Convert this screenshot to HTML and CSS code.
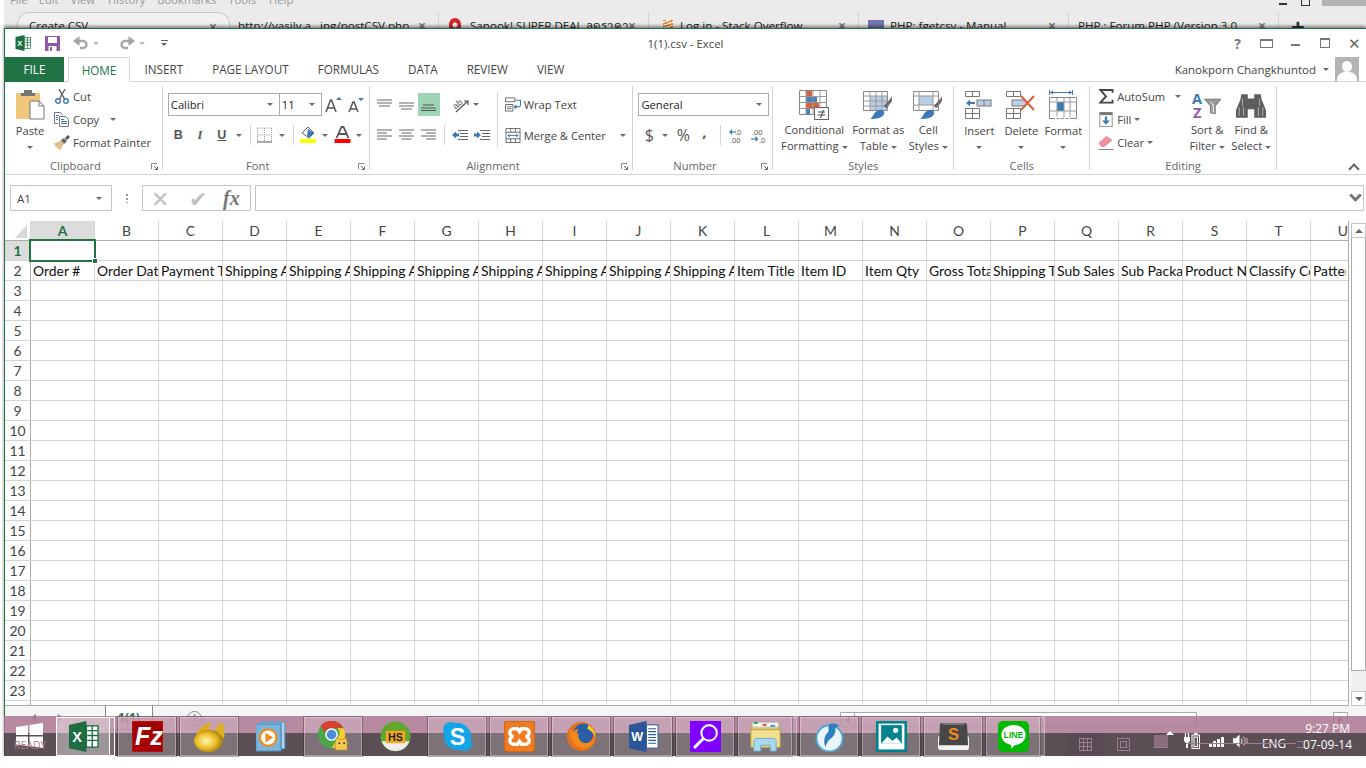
FILE: index.html
```html
<!DOCTYPE html>
<html lang="en">
<head>
<meta charset="utf-8">
<title>1(1).csv - Excel</title>
<link rel="stylesheet" href="styles.css">
</head>
<body>
<svg class="sprites" aria-hidden="true">
  <symbol id="xl" viewBox="0 0 32 32"><path d="M1 4 19 0v32L1 28z" fill="#1d6f42"/><rect x="19" y="5" width="12" height="22" fill="#fff" stroke="#1d6f42" stroke-width="1.4"/><path d="M20 10h11M20 15h11M20 20h11M25 5v22" stroke="#1d6f42" stroke-width="1.4"/><text x="4.5" y="22" font-family="Liberation Sans" font-weight="700" font-size="15" fill="#fff">X</text></symbol>
  <symbol id="save" viewBox="0 0 15 15"><rect width="15" height="15" fill="#8e5aa8"/><rect x="3" y="1" width="9" height="6" fill="#fff"/><rect x="3.5" y="10" width="8" height="5" fill="#fff"/><rect x="5" y="11" width="2" height="4" fill="#8e5aa8"/></symbol>
  <symbol id="undo" viewBox="0 0 16 14"><path d="M3 5h7a3.5 3.5 0 0 1 0 7H7" fill="none" stroke="#a6a6a6" stroke-width="2.4"/><path d="M6.5 0 0 5l6.500 5z" fill="#a6a6a6"/></symbol>
  <symbol id="redo" viewBox="0 0 16 14"><path d="M13 5H6a3.500 3.500 0 0 0 0 7h3" fill="none" stroke="#a6a6a6" stroke-width="2.400"/><path d="M9.500 0 16 5l-6.500 5z" fill="#a6a6a6"/></symbol>
  <symbol id="paste" viewBox="0 0 29 30"><rect x="0" y="3" width="24" height="26" rx="1" fill="#efc67c"/><rect x="8" y="0" width="8" height="4" fill="#767676"/><rect x="5" y="3" width="14" height="3" fill="#767676"/><path d="M14 11h9l5 5v13H14z" fill="#fff" stroke="#777"/><path d="M23 11v5h5" fill="none" stroke="#777"/></symbol>
  <symbol id="cut" viewBox="0 0 14 15"><circle cx="3" cy="12" r="2.300" fill="none" stroke="#3d7ab5" stroke-width="1.400"/><circle cx="11" cy="12" r="2.300" fill="none" stroke="#3d7ab5" stroke-width="1.400"/><path d="M4.500 10 10 0M9.500 10 4 0" stroke="#666" stroke-width="1.500"/></symbol>
  <symbol id="copy" viewBox="0 0 16 15"><path d="M.5.500h6l2 2V3M.5.500v11H4" fill="none" stroke="#777"/><path d="M5.500 4.500h6l3 3v7h-9z" fill="#fff" stroke="#777"/><path d="M2 3.500h3M2 5.500h2M2 7.500h2M7 7.500h3M7 9.500h6M7 11.500h6" stroke="#3d7ab5"/></symbol>
  <symbol id="brush" viewBox="0 0 16 15"><path d="M0 8c3 0 5-1 7-3l3 4c-2 2-3 4-3 6-3-1-6-3-7-7z" fill="#dfc187"/><path d="M7 5l3 4 3-3-3-3z" fill="#666"/><path d="M11 3l3-3 2 2-3 3z" fill="#555"/></symbol>
  <symbol id="launch" viewBox="0 0 7 7"><path d="M.5 6V.5H6" fill="none" stroke="#888"/><path d="M3 3l3 3M6.500 3.500v3h-3" fill="none" stroke="#666"/></symbol>
  <symbol id="growA" viewBox="0 0 18 16"><path d="M1 15 5.500 3h1L11 15M3 11h6" fill="none" stroke="#555" stroke-width="1.500"/><path d="M11 3l3-3 3 3z" fill="#3d7ab5"/></symbol>
  <symbol id="shrinkA" viewBox="0 0 18 16"><path d="M2 15 6 5h1l4 10M4 12h5" fill="none" stroke="#555" stroke-width="1.500"/><path d="M11 1h6l-3 3z" fill="#3d7ab5"/></symbol>
  <symbol id="borders" viewBox="0 0 15 15"><path d="M.5.500h14M.5 7.500h14M.5.500v14M7.500.500v14M14.500.500v14" stroke="#999" stroke-dasharray="1 1" fill="none"/><path d="M0 14.500h15" stroke="#555"/></symbol>
  <symbol id="fill" viewBox="0 0 17 18"><path d="M2 7l6-6 6 6-5 5z" fill="#fff" stroke="#666"/><path d="M8 3l6 4-5 5-2-2z" fill="#3d7ab5"/><rect y="13" width="16" height="4" fill="#ff0"/></symbol>
  <symbol id="fontA" viewBox="0 0 16 18"><path d="M2 12 7 1h2l5 11M4.500 8h7" fill="none" stroke="#555" stroke-width="1.800"/><rect y="13" width="16" height="4" fill="#f00"/></symbol>
  <symbol id="atop" viewBox="0 0 15 12"><path d="M0 1h15M0 4h15M2 7h11" stroke="#666"/></symbol>
  <symbol id="amid" viewBox="0 0 15 12"><path d="M0 4h15M0 7h15M2 10h11" stroke="#666"/></symbol>
  <symbol id="abot" viewBox="0 0 15 12"><path d="M2 6h11M0 9h15M0 11.500h15" stroke="#555"/></symbol>
  <symbol id="orient" viewBox="0 0 18 16"><text x="1" y="10" font-family="Liberation Sans" font-size="9" fill="#555" transform="rotate(-40 6 8)">ab</text><path d="M4 15 16 4M12 4h4v4" fill="none" stroke="#555" stroke-width="1.200"/></symbol>
  <symbol id="lleft" viewBox="0 0 15 12"><path d="M0 1h15M0 4h10M0 7h15M0 10h10" stroke="#666"/></symbol>
  <symbol id="lcen" viewBox="0 0 15 12"><path d="M0 1h15M2.500 4h10M0 7h15M2.500 10h10" stroke="#666"/></symbol>
  <symbol id="lright" viewBox="0 0 15 12"><path d="M0 1h15M5 4h10M0 7h15M5 10h10" stroke="#666"/></symbol>
  <symbol id="indL" viewBox="0 0 16 12"><path d="M6 1h10M8 4h8M8 7h8M6 10h10" stroke="#666"/><path d="M0 5.500 4 2v2h3v3H4v2z" fill="#3d7ab5"/></symbol>
  <symbol id="indR" viewBox="0 0 16 12"><path d="M6 1h10M8 4h8M8 7h8M6 10h10" stroke="#666"/><path d="M7 5.500 3 2v2H0v3h3v2z" fill="#3d7ab5"/></symbol>
  <symbol id="wrap" viewBox="0 0 17 15"><path d="M.5.500h10v4H.5zM.5 7.500h8v7H.5zM2 10h5M2 12h5" fill="none" stroke="#666"/><path d="M11 3h6M16.500 3v5c0 2-2 2-3 2H10" fill="none" stroke="#3d7ab5" stroke-width="1.200"/><path d="M9 10l3-2.500v5z" fill="#3d7ab5"/></symbol>
  <symbol id="merge" viewBox="0 0 16 16"><path d="M.5.500h15v15H.5zM.5 4.500h15M.5 11.500h15M5.500.500v4M10.500.500v4M5.500 11.500v4M10.500 11.500v4" fill="none" stroke="#666"/><path d="M3 8h10" stroke="#3d7ab5"/><path d="M2 8l2.500-2v4zM14 8l-2.500-2v4z" fill="#3d7ab5"/></symbol>
  <symbol id="incdec" viewBox="0 0 16 15"><text x="6" y="6.500" font-family="Liberation Sans" font-size="7.500" fill="#555">.0</text><text x="1" y="14.500" font-family="Liberation Sans" font-size="7.500" fill="#555">.00</text><path d="M1 4h6" stroke="#3d7ab5" stroke-width="1.200"/><path d="M0 4l3-3v6z" fill="#3d7ab5"/></symbol>
  <symbol id="decinc" viewBox="0 0 16 15"><text x="1" y="6.500" font-family="Liberation Sans" font-size="7.500" fill="#555">.00</text><text x="8" y="14.500" font-family="Liberation Sans" font-size="7.500" fill="#555">.0</text><path d="M0 11h6" stroke="#3d7ab5" stroke-width="1.200"/><path d="M7.500 11l-3-3v6z" fill="#3d7ab5"/></symbol>
  <symbol id="cf" viewBox="0 0 30 30"><path d="M.5.500h27v24H.5z" fill="#fff" stroke="#888"/><rect x="7" y="1" width="6" height="5" fill="#d9603c"/><rect x="7" y="6" width="11" height="6" fill="#4a81bd"/><rect x="7" y="13" width="13" height="5" fill="#d9603c"/><rect x="7" y="19" width="4" height="6" fill="#4a81bd"/><path d="M7 1v24M14 1v24M21 1v24M1 6.500h27M1 12.500h27M1 18.500h27" stroke="#999" fill="none"/><rect x="15.500" y="17.500" width="14" height="12" fill="#fff" stroke="#666"/><path d="M19 22h7M19 25h7M24.500 20l-3 8" stroke="#444" fill="none"/></symbol>
  <symbol id="fat" viewBox="0 0 30 30"><path d="M.5 1.500h24v19H.5z" fill="#fff" stroke="#888"/><rect x="7" y="6" width="17" height="14" fill="#b8cfe5"/><path d="M7 1.500v19M13 1.500v19M19 1.500v19M1 6h24M1 11h24M1 16h24" stroke="#999" fill="none"/><path d="M21 16 28 8l1 1-6 9z" fill="#555"/><path d="M22 16l5-6 2-4v5l-5 7z" fill="#707070"/><path d="M7 29c3-1 3-7 9-9 3-1 6 1 5 4-1 4-8 5-14 5z" fill="#3d78b8"/></symbol>
  <symbol id="cs" viewBox="0 0 30 30"><path d="M.5 1.500h25v19H.5z" fill="#fff" stroke="#888"/><rect x="6" y="6" width="14" height="9" fill="#b8cfe5"/><path d="M6 1.500v19M20 1.500v19M1 6h25M1 15h25" stroke="#999" fill="none"/><path d="M21 16 28 8l1 1-6 9z" fill="#555"/><path d="M22 16l5-6 2-4v5l-5 7z" fill="#707070"/><path d="M7 29c3-1 3-7 9-9 3-1 6 1 5 4-1 4-8 5-14 5z" fill="#3d78b8"/></symbol>
  <symbol id="ins" viewBox="0 0 28 28"><path d="M.5.500h14v5H.5zM7.500.500v5M.5 17.500h14v10H.5zM.5 22.500h14M7.500 17.500v10" fill="none" stroke="#777"/><rect x="12" y="9" width="14" height="6" fill="#b8cfe5" stroke="#777"/><path d="M19 9v6" stroke="#777"/><path d="M3 12h7" stroke="#3d7ab5" stroke-width="2"/><path d="M1 12l4-3.500v7z" fill="#3d7ab5"/></symbol>
  <symbol id="del" viewBox="0 0 30 28"><path d="M.5.500h14v5H.5zM7.500.500v5M.5 17.500h14v10H.5zM.5 22.500h14M7.500 17.500v10" fill="none" stroke="#777"/><path d="M6 9h12l3 3-3 3H6z" fill="#b8cfe5" stroke="#777"/><path d="M15 5l13 14M28 5 15 19" stroke="#d9603c" stroke-width="2"/></symbol>
  <symbol id="fmt" viewBox="0 0 28 30"><path d="M1 2.500h22" stroke="#3d7ab5"/><path d="M.5 0v5M23.500 0v5" stroke="#3d7ab5"/><path d="M1 2.500l3-2v4zM23 2.500l-3-2v4z" fill="#3d7ab5"/><path d="M.5 7.500h27v21H.5z" fill="#fff" stroke="#888"/><rect x="8" y="12" width="7" height="9" fill="#3d7ab5"/><path d="M8 7.500v21M15 7.500v21M21 7.500v21M1 12h27M1 21h27" stroke="#999" fill="none"/><path d="M6 28.500q3-3 6 0M15 28.500q3-3 6 0" stroke="#fff" stroke-width="2" fill="none"/></symbol>
  <symbol id="sigma" viewBox="0 0 16 16"><path d="M15 4V1H2l6 7-6 6.500h13v-3" fill="none" stroke="#444" stroke-width="2"/></symbol>
  <symbol id="fillb" viewBox="0 0 15 17"><rect x=".5" y=".5" width="14" height="16" fill="#fff" stroke="#888"/><rect x=".5" y=".5" width="14" height="3" fill="#777"/><path d="M7.500 5v6" stroke="#3d7ab5" stroke-width="2.500"/><path d="M3 9.500h9l-4.500 5z" fill="#3d7ab5"/></symbol>
  <symbol id="eraser" viewBox="0 0 15 15"><path d="M0 8 8 1l6 4-8 7H3z" fill="#ee8e9a"/><path d="M0 14.500h15" stroke="#888"/></symbol>
  <symbol id="sort" viewBox="0 0 31 28"><text x="0" y="12.500" font-family="Open Sans" font-weight="700" font-size="15" fill="#3d7ab5">A</text><text x="1" y="27" font-family="Open Sans" font-weight="700" font-size="15" fill="#8e5aa8">Z</text><path d="M13 8h17l-6 7v8l-5-1v-7z" fill="#999" stroke="#777"/><path d="M19 11l3 3v8" stroke="#fff" fill="none"/></symbol>
  <symbol id="find" viewBox="0 0 28 26"><path d="M5 3h6v4h6V3h6l1 5 4 10v7H17v-8h-6v8H0v-7L4 8z" fill="#5e5e5e"/><path d="M3 15v8M7 15v8M21 15v8M25 15v8M6 7v7M22 7v7" stroke="#aaa"/></symbol>
  <symbol id="win" viewBox="0 0 27 25"><path d="M0 4 12 2.300V12H0zM13.500 2l13.500-2v12H13.500zM0 13.500h12V23L0 21.500zM13.500 13.500H27V25l-13.500-2z" fill="#fff"/></symbol>
  <symbol id="fz" viewBox="0 0 32 32"><rect width="32" height="32" fill="#a40000" stroke="#d33" stroke-dasharray="2 1"/><text x="3" y="25" font-family="Liberation Sans" font-weight="700" font-style="italic" font-size="26" fill="#fff">Fz</text></symbol>
  <symbol id="navi" viewBox="0 0 32 32"><defs><radialGradient id="gold" cx=".42" cy=".5" r=".65"><stop offset="0" stop-color="#fff3b5"/><stop offset=".5" stop-color="#eec02a"/><stop offset="1" stop-color="#8a6708"/></radialGradient></defs><path d="M21 14C22 8 25 3 29 1c2 5 3 11 2 17z" fill="#e0b020"/><path d="M2 18C2 9 9 3 19 2c-3 3-4 6-4 9z" fill="#dcab1e"/><ellipse cx="15" cy="20.500" rx="15" ry="11.500" fill="url(#gold)"/></symbol>
  <symbol id="wmp" viewBox="0 0 28 28"><rect x="6" y="1" width="20" height="24" fill="#b7d5ea" stroke="#5a9ccb"/><rect x="3" y="2" width="20" height="24" fill="#a5cbe6" stroke="#5a9ccb"/><rect x="0" y="3" width="22" height="24" fill="#7cb5dc" stroke="#5a9ccb"/><circle cx="11" cy="15" r="8.500" fill="#f08a1d"/><circle cx="11" cy="15" r="6.500" fill="#fff"/><path d="M8.500 10.500l7 4.500-7 4.500z" fill="#f08a1d"/></symbol>
  <symbol id="chrome" viewBox="0 0 32 32"><circle cx="14" cy="14" r="14" fill="#4aa648"/><path d="M14 0a14 14 0 0 1 12.500 7.500H14a7 7 0 0 0-6.500 4L2.500 5A14 14 0 0 1 14 0z" fill="#d8412f"/><path d="M26.500 7.500A14 14 0 0 1 14 28l6-10a7 7 0 0 0 0-10.500z" fill="#f7cd2f"/><circle cx="14" cy="14" r="6.500" fill="#fff"/><circle cx="14" cy="14" r="5" fill="#4a8bd6"/><path d="M18 22l1-5 3 2h4l3-2 1 5v8H18z" fill="#f5c94d" stroke="#b8862a" stroke-width=".6"/><circle cx="22" cy="23" r="1" fill="#333"/><circle cx="27" cy="23" r="1" fill="#333"/></symbol>
  <symbol id="hs" viewBox="0 0 32 32"><circle cx="16" cy="16" r="15.500" fill="#5fa72f"/><path d="M1.500 21h29A15.500 15.500 0 0 1 1.500 21z" fill="#eee"/><rect x="6" y="10" width="20" height="13" rx="1" fill="#f4a81d"/><text x="16" y="21" text-anchor="middle" font-family="Liberation Sans" font-weight="700" font-size="11" fill="#222">HS</text></symbol>
  <symbol id="skype" viewBox="0 0 32 32"><circle cx="9" cy="9" r="8" fill="#12a5e8"/><circle cx="23" cy="23" r="8" fill="#12a5e8"/><circle cx="16" cy="16" r="14" fill="#12a5e8"/><text x="16" y="24.500" text-anchor="middle" font-family="Liberation Sans" font-weight="700" font-size="24" fill="#fff">S</text></symbol>
  <symbol id="xampp" viewBox="0 0 32 32"><rect width="32" height="32" rx="4" fill="#ee7a22" stroke="#b65a12"/><path d="M10 8h4l2 3 2-3h4a4 4 0 0 1 0 8 4 4 0 0 1 0 8h-4l-2-3-2 3h-4a4 4 0 0 1 0-8 4 4 0 0 1 0-8z" fill="none" stroke="#fff" stroke-width="3.500"/></symbol>
  <symbol id="fx" viewBox="0 0 32 32"><circle cx="16" cy="16" r="15" fill="#e8701a"/><circle cx="18" cy="13" r="10.500" fill="#2a5fa8"/><path d="M4 10c0 9 5 18 14 18 7 0 11-5 12-11-2 4-5 6-9 6-6 0-9-5-8-9-2-1-2-3 0-6-4 1-6 3-7 5 0-2 0-3 1-4-2 1-3 1-3 1z" fill="#f28a1e"/><path d="M23 4c4 2 8 7 7 13-1-4-4-7-8-9z" fill="#f7c52f"/></symbol>
  <symbol id="word" viewBox="0 0 32 32"><path d="M1 4 19 0v32L1 28z" fill="#2b579a"/><rect x="19" y="4" width="12" height="24" fill="#fff" stroke="#2b579a"/><path d="M21 8h8M21 11h8M21 14h8M21 17h8M21 20h8M21 23h8" stroke="#2b579a" stroke-width="1.200"/><text x="9.500" y="21" text-anchor="middle" font-family="Liberation Sans" font-weight="700" font-size="13" fill="#fff">W</text></symbol>
  <symbol id="mag" viewBox="0 0 30 30"><rect width="30" height="30" fill="#7f00ff"/><circle cx="18.500" cy="11.500" r="7.500" fill="none" stroke="#fff" stroke-width="2"/><path d="M13 17 4 26" stroke="#fff" stroke-width="2.800"/></symbol>
  <symbol id="folder" viewBox="0 0 32 30"><path d="M1 4h28l2 4v18H1z" fill="#d9c16d" stroke="#bda54a"/><path d="M3 1h26v4H3z" fill="#fff" stroke="#ddd"/><rect x="4" y="0" width="4" height="2" fill="#1aaa35"/><rect x="13" y="2" width="4" height="2" fill="#d44"/><rect x="21" y="3" width="5" height="2" fill="#3ba0e0"/><path d="M1 8h30v18H1z" fill="#f2e08f" stroke="#bda54a"/><path d="M4 30V19q0-2 2-2h18q3 0 3 2v11h-6v-6H11v6z" fill="#a9d8ef" stroke="#6fb2d6"/></symbol>
  <symbol id="tbird" viewBox="0 0 30 32"><circle cx="15" cy="18" r="13.500" fill="#eaf6fb" stroke="#4fa7cf" stroke-width="2"/><path d="M14 4c4-3 9-1 11 1l-4 2c1 5-2 10-6 12-2 2-4 6-4 8-3-6-1-13 3-16z" fill="#2f7fc1"/></symbol>
  <symbol id="photo" viewBox="0 0 30 30"><rect width="30" height="30" fill="#00838f"/><rect x="2.500" y="2.500" width="25" height="25" fill="#fff"/><rect x="5" y="4" width="20" height="18" fill="#00838f"/><path d="M5 22l6-7 5 4 4-3 5 6z" fill="#fff"/><circle cx="19" cy="9" r="2.500" fill="#fff"/></symbol>
  <symbol id="subl" viewBox="0 0 32 30"><rect x="0" y="14" width="32" height="15" rx="3" fill="#f2f2f2"/><path d="M4 1h24q2 0 2 2l1 21H1L2 3q0-2 2-2z" fill="#474747"/><path d="M5 1h22v2H5z" fill="#777"/><text x="16" y="19" text-anchor="middle" font-family="Liberation Sans" font-weight="700" font-size="17" fill="#f08a1d">S</text></symbol>
  <symbol id="line" viewBox="0 0 32 32"><rect width="32" height="32" rx="5" fill="#00b900"/><ellipse cx="16" cy="14.500" rx="12.500" ry="10.500" fill="#fff"/><path d="M13 24l5 0-4 4.500z" fill="#fff"/><text x="16" y="18" text-anchor="middle" font-family="Liberation Sans" font-weight="700" font-size="9" fill="#00b900">LINE</text></symbol>
  <symbol id="powr" viewBox="0 0 16 16"><path d="M1.500 0v4M4.500 0v4" stroke="#fff" stroke-width="1.200"/><path d="M0 4h6v4L4 10v5H2v-5L0 8z" fill="#fff"/><rect x="8" y="2" width="7.500" height="13.500" fill="none" stroke="#fff"/><rect x="10" y="0" width="3.500" height="2" fill="#fff"/><rect x="9.500" y="3.500" width="4.500" height="10.500" fill="#fff"/><rect x="10.500" y="4.500" width="2.500" height="8.500" fill="#6a5c65"/></symbol>
  <symbol id="spk" viewBox="0 0 15 14"><path d="M0 4h3l4-4v14l-4-4H0z" fill="#fff"/><path d="M9 4.500q1.500 2.500 0 5M11.500 2.500q3 4.500 0 9" fill="none" stroke="#fff"/></symbol>
</svg>

<header class="browser">
  <div class="bmenu">
    <span class="m1">File</span><span class="m2">Edit</span><span class="m3">View</span><span class="m4">History</span><span class="m5">Bookmarks</span><span class="m6">Tools</span><span class="m7">Help</span>
    <span class="bctrl"><i class="bmin"></i><i class="bmax"></i><i class="bclose"></i></span>
  </div>
  <div class="btabs">
    <div class="btab first"><span>Create CSV</span><b>×</b></div>
    <div class="btab t2"><span>http://vasily.a...ing/postCSV.php</span><b>×</b></div>
    <div class="btab t3"><i class="fav-s"></i><span>Sanook! SUPER DEAL ลดราคา</span><b>×</b></div>
    <div class="btab t4"><i class="fav-so"></i><span>Log in - Stack Overflow</span><b>×</b></div>
    <div class="btab t5"><i class="fav-php"></i><span>PHP: fgetcsv - Manual</span><b>×</b></div>
    <div class="btab t6"><span>PHP : Forum PHP (Version 3.0</span><b>×</b></div>
    <div class="bplus">+</div>
  </div>
</header>

<main class="window">
  <div class="titlebar">
    <div class="qat">
      <svg class="i-xl"><use href="#xl"/></svg>
      <svg class="i-save"><use href="#save"/></svg>
      <svg class="i-undo"><use href="#undo"/></svg><i class="caret lite"></i>
      <svg class="i-redo"><use href="#redo"/></svg><i class="caret lite"></i>
      <span class="qcust"></span>
    </div>
    <div class="doctitle">1(1).csv - Excel</div>
    <div class="winbtns">
      <span class="wb help">?</span>
      <span class="wb"><span class="ropt"></span></span>
      <span class="wb"><span class="wmin"></span></span>
      <span class="wb"><span class="wmax"></span></span>
      <span class="wb close">✕</span>
    </div>
  </div>

  <nav class="tabs">
    <span class="tab file">FILE</span>
    <span class="tab home">HOME</span>
    <span class="tab">INSERT</span>
    <span class="tab">PAGE LAYOUT</span>
    <span class="tab">FORMULAS</span>
    <span class="tab">DATA</span>
    <span class="tab">REVIEW</span>
    <span class="tab">VIEW</span>
    <span class="user">Kanokporn Changkhuntod<i class="caret"></i><span class="avatar"><i></i><b></b></span></span>
  </nav>

  <section class="ribbon">
    <div class="group g-clip">
      <div class="gbody">
        <div class="big paste"><div class="bigicon"><svg class="i-paste"><use href="#paste"/></svg></div><span>Paste</span><i class="caret low"></i></div>
        <div class="smallcol">
          <div class="small"><svg class="si"><use href="#cut"/></svg><span>Cut</span></div>
          <div class="small"><svg class="si"><use href="#copy"/></svg><span>Copy</span><i class="caret gap11"></i></div>
          <div class="small"><svg class="si"><use href="#brush"/></svg><span>Format Painter</span></div>
        </div>
      </div>
      <div class="glabel withlaunch">Clipboard<svg class="launch"><use href="#launch"/></svg></div>
    </div>

    <div class="group g-font">
      <div class="gbody rows">
        <div class="row1">
          <div class="combo w-font"><span>Calibri</span><i class="caret"></i></div>
          <div class="combo w-size"><span>11</span><i class="caret"></i></div>
          <span class="t w22 ml1"><svg class="i18"><use href="#growA"/></svg></span>
          <span class="t w22"><svg class="i18"><use href="#shrinkA"/></svg></span>
        </div>
        <div class="row2">
          <span class="t w21 bold">B</span><span class="t w22 ital">I</span><span class="t w22 und">U</span><span class="t w12"><i class="caret"></i></span>
          <span class="vsep ml5"></span>
          <span class="t w16 ml6"><svg class="i15"><use href="#borders"/></svg></span><span class="t w18"><i class="caret"></i></span>
          <span class="vsep ml2"></span>
          <span class="t w16 ml7"><svg class="i17"><use href="#fill"/></svg></span><span class="t w16"><i class="caret"></i></span>
          <span class="t w16 ml2"><svg class="i17"><use href="#fontA"/></svg></span><span class="t w16"><i class="caret"></i></span>
        </div>
      </div>
      <div class="glabel withlaunch">Font<svg class="launch"><use href="#launch"/></svg></div>
    </div>

    <div class="group g-align">
      <div class="gbody">
        <div class="rows aligncol">
          <div class="row1">
            <span class="t w22"><svg class="i15"><use href="#atop"/></svg></span>
            <span class="t w22"><svg class="i15"><use href="#amid"/></svg></span>
            <span class="t w22 picked"><svg class="i15"><use href="#abot"/></svg></span>
            <span class="t w22 ml10"><svg class="i18"><use href="#orient"/></svg></span>
            <span class="t w8"><i class="caret"></i></span>
          </div>
          <div class="row2">
            <span class="t w22"><svg class="i15"><use href="#lleft"/></svg></span>
            <span class="t w22"><svg class="i15"><use href="#lcen"/></svg></span>
            <span class="t w22"><svg class="i15"><use href="#lright"/></svg></span>
            <span class="vsep ml4"></span>
            <span class="t w22 ml4"><svg class="i16"><use href="#indL"/></svg></span>
            <span class="t w22"><svg class="i16"><use href="#indR"/></svg></span>
          </div>
        </div>
        <span class="vsep tall"></span>
        <div class="rows wrapcol">
          <div class="row1 txt"><svg class="si"><use href="#wrap"/></svg><span>Wrap Text</span></div>
          <div class="row2 txt"><svg class="si"><use href="#merge"/></svg><span>Merge &amp; Center</span><i class="caret gap10"></i></div>
        </div>
      </div>
      <div class="glabel withlaunch">Alignment<svg class="launch"><use href="#launch"/></svg></div>
    </div>

    <div class="group g-num">
      <div class="gbody rows">
        <div class="row1"><div class="combo w-gen"><span>General</span><i class="caret"></i></div></div>
        <div class="row2">
          <span class="t w22 sym">$</span><span class="t w10"><i class="caret"></i></span>
          <span class="t w22 ml2 sym">%</span><span class="t w20 comma">,</span>
          <span class="vsep ml6"></span>
          <span class="t w22 ml5"><svg class="i16"><use href="#incdec"/></svg></span>
          <span class="t w22"><svg class="i16"><use href="#decinc"/></svg></span>
        </div>
      </div>
      <div class="glabel withlaunch">Number<svg class="launch"><use href="#launch"/></svg></div>
    </div>

    <div class="group g-styles">
      <div class="gbody">
        <div class="big w82"><div class="bigicon"><svg class="i30"><use href="#cf"/></svg></div><span>Conditional</span><span>Formatting<i class="caret in"></i></span></div>
        <div class="big w46"><div class="bigicon"><svg class="i30"><use href="#fat"/></svg></div><span>Format as</span><span>Table<i class="caret in"></i></span></div>
        <div class="big w54"><div class="bigicon"><svg class="i30"><use href="#cs"/></svg></div><span>Cell</span><span>Styles<i class="caret in"></i></span></div>
      </div>
      <div class="glabel">Styles</div>
    </div>

    <div class="group g-cells">
      <div class="gbody">
        <div class="big w50"><div class="bigicon"><svg class="i28"><use href="#ins"/></svg></div><span>Insert</span><i class="caret low"></i></div>
        <div class="big w34"><div class="bigicon"><svg class="i30"><use href="#del"/></svg></div><span>Delete</span><i class="caret low"></i></div>
        <div class="big w50"><div class="bigicon"><svg class="i30"><use href="#fmt"/></svg></div><span>Format</span><i class="caret low"></i></div>
      </div>
      <div class="glabel">Cells</div>
    </div>

    <div class="group g-edit">
      <div class="gbody">
        <div class="smallcol editcol">
          <div class="small"><svg class="si"><use href="#sigma"/></svg><span>AutoSum</span><i class="caret gap8"></i></div>
          <div class="small"><svg class="si"><use href="#fillb"/></svg><span>Fill</span><i class="caret in"></i></div>
          <div class="small"><svg class="si"><use href="#eraser"/></svg><span>Clear</span><i class="caret in"></i></div>
        </div>
        <div class="big w44"><div class="bigicon"><svg class="i30"><use href="#sort"/></svg></div><span>Sort &amp;</span><span>Filter<i class="caret in"></i></span></div>
        <div class="big w44"><div class="bigicon"><svg class="i30"><use href="#find"/></svg></div><span>Find &amp;</span><span>Select<i class="caret in"></i></span></div>
      </div>
      <div class="glabel">Editing</div>
    </div>
    <div class="collapse"><i></i></div>
  </section>

  <section class="fbar">
    <div class="namebox"><span>A1</span><i class="caret"></i></div>
    <div class="fdots"></div>
    <div class="fxbox"><span class="fxx">✕</span><span class="fxc">✔</span><span class="fxf">fx</span></div>
    <div class="finput"><i class="fchev"></i></div>
  </section>

  <section class="sheet">
    <div class="grid">
      <div class="colhead">
        <span class="corner"><i></i></span>
        <span class="ch on">A</span><span class="ch">B</span><span class="ch">C</span><span class="ch">D</span><span class="ch">E</span><span class="ch">F</span><span class="ch">G</span><span class="ch">H</span><span class="ch">I</span><span class="ch">J</span><span class="ch">K</span><span class="ch">L</span><span class="ch">M</span><span class="ch">N</span><span class="ch">O</span><span class="ch">P</span><span class="ch">Q</span><span class="ch">R</span><span class="ch">S</span><span class="ch">T</span><span class="ch last">U</span>
      </div>
      <div class="gr"><span class="rh on">1</span><div class="blank"><div class="a1"><i></i></div></div></div>
      <div class="gr"><span class="rh">2</span>
        <span class="c">Order #</span><span class="c">Order Date</span><span class="c">Payment Type</span><span class="c">Shipping Address</span><span class="c">Shipping Address</span><span class="c">Shipping Address</span><span class="c">Shipping Address</span><span class="c">Shipping Address</span><span class="c">Shipping Address</span><span class="c">Shipping Address</span><span class="c">Shipping Address</span><span class="c">Item Title</span><span class="c">Item ID</span><span class="c">Item Qty</span><span class="c">Gross Total</span><span class="c">Shipping Total</span><span class="c">Sub Sales</span><span class="c">Sub Package</span><span class="c">Product Name</span><span class="c">Classify Code</span><span class="c last">Pattern</span>
      </div>
      <div class="gr"><span class="rh">3</span><div class="blank"></div></div>
      <div class="gr"><span class="rh">4</span><div class="blank"></div></div>
      <div class="gr"><span class="rh">5</span><div class="blank"></div></div>
      <div class="gr"><span class="rh">6</span><div class="blank"></div></div>
      <div class="gr"><span class="rh">7</span><div class="blank"></div></div>
      <div class="gr"><span class="rh">8</span><div class="blank"></div></div>
      <div class="gr"><span class="rh">9</span><div class="blank"></div></div>
      <div class="gr"><span class="rh">10</span><div class="blank"></div></div>
      <div class="gr"><span class="rh">11</span><div class="blank"></div></div>
      <div class="gr"><span class="rh">12</span><div class="blank"></div></div>
      <div class="gr"><span class="rh">13</span><div class="blank"></div></div>
      <div class="gr"><span class="rh">14</span><div class="blank"></div></div>
      <div class="gr"><span class="rh">15</span><div class="blank"></div></div>
      <div class="gr"><span class="rh">16</span><div class="blank"></div></div>
      <div class="gr"><span class="rh">17</span><div class="blank"></div></div>
      <div class="gr"><span class="rh">18</span><div class="blank"></div></div>
      <div class="gr"><span class="rh">19</span><div class="blank"></div></div>
      <div class="gr"><span class="rh">20</span><div class="blank"></div></div>
      <div class="gr"><span class="rh">21</span><div class="blank"></div></div>
      <div class="gr"><span class="rh">22</span><div class="blank"></div></div>
      <div class="gr"><span class="rh">23</span><div class="blank"></div></div>
      <div class="gr partial"><span class="rh"></span><div class="blank"></div></div>
    </div>
    <div class="vscroll">
      <div class="sbtn"><i class="up"></i></div>
      <div class="sthumb"></div>
      <div class="sbtn"><i class="down"></i></div>
    </div>
  </section>

  <section class="sheetbar">
    <div class="snav"><i class="al"></i><i class="ar"></i></div>
    <div class="stab">1(1)</div>
    <div class="splus">+</div>
    <div class="hscroll"><span class="hb"><i class="al"></i></span><span class="hthumb"></span><span class="hb end"><i class="ar"></i></span></div>
  </section>
</main>

<footer class="taskbar">
  <span class="ready">READY</span>
  <div class="start"><svg class="i-win"><use href="#win"/></svg></div>
  <div class="tb act stack"><svg class="ti"><use href="#xl"/></svg></div>
  <div class="tb on"><svg class="ti"><use href="#fz"/></svg></div>
  <div class="tb on"><svg class="ti"><use href="#navi"/></svg></div>
  <div class="tb"><svg class="ti"><use href="#wmp"/></svg></div>
  <div class="tb on"><svg class="ti"><use href="#chrome"/></svg></div>
  <div class="tb"><svg class="ti"><use href="#hs"/></svg></div>
  <div class="tb on"><svg class="ti"><use href="#skype"/></svg></div>
  <div class="tb on"><svg class="ti"><use href="#xampp"/></svg></div>
  <div class="tb on"><svg class="ti"><use href="#fx"/></svg></div>
  <div class="tb on"><svg class="ti"><use href="#word"/></svg></div>
  <div class="tb on"><svg class="ti"><use href="#mag"/></svg></div>
  <div class="tb on stack"><svg class="ti"><use href="#folder"/></svg></div>
  <div class="tb on"><svg class="ti"><use href="#tbird"/></svg></div>
  <div class="tb on"><svg class="ti"><use href="#photo"/></svg></div>
  <div class="tb on"><svg class="ti"><use href="#subl"/></svg></div>
  <div class="tb on stack"><svg class="ti"><use href="#line"/></svg></div>
  <div class="tray">
    <span class="slider"></span>
    <span class="vw active"><i class="g1"></i></span>
    <span class="vw"><i class="g2"></i></span>
    <span class="showhid"><i class="g3"></i><b></b></span>
    <svg class="i-pow"><use href="#powr"/></svg>
    <span class="ico sig"><i></i><i></i><i></i><i></i></span>
    <svg class="i-spk"><use href="#spk"/></svg>
    <span class="eng">ENG</span>
    <span class="clock"><span>9:27 PM</span><span class="date">07-09-14</span></span>
  </div>
</footer>
</body>
</html>
```
FILE: styles.css
```css
*{box-sizing:border-box}
html,body{margin:0;padding:0}
body{width:1366px;height:768px;overflow:hidden;background:#fff;position:relative;font-family:"Open Sans","Noto Sans",sans-serif;font-size:11.2px;color:#444}
i{font-style:normal;display:block}
svg{display:block;flex:none}
.sprites{position:absolute;width:0;height:0}

/* browser behind */
.browser{height:28px;margin-left:4px;background:#ebebeb;overflow:hidden;color:#333}
.bmenu{display:flex;height:20px;margin-top:-8px;line-height:16px;font-size:11.200px;color:#9a9a9a;position:relative}
.bmenu span{display:block}
.m1{margin-left:6px}.m2{margin-left:11px}.m3{margin-left:12px}.m4{margin-left:13px}.m5{margin-left:12px}.m6{margin-left:12px}.m7{margin-left:13px}
.bmenu .bctrl{margin-left:auto;display:flex;height:14px;align-items:flex-start}
.bmin{width:8px;height:2px;background:#333;margin-top:11px;margin-right:14px}
.bmax{width:9px;height:14px;border:1px solid #333;margin-right:12px}
.bclose{width:44px;height:14px;background:#b3b3b3}
.btabs{display:flex;height:22px;font-size:11.600px;color:#222;line-height:20px}
.btab{display:flex;align-items:flex-start;height:30px;position:relative;padding-top:4px;border-right:1px solid #d2d2d2;overflow:visible;flex:none}
.btab span{white-space:nowrap;overflow:hidden;display:block}
.btab b{position:absolute;top:4px;right:12px;color:#777;font-size:14px;font-weight:700}
.btab.first{margin-left:13px;width:213px;border:1px solid #c5c5c5;border-radius:12px 12px 0 0;padding-left:11px;background:#f1f1f1;padding-top:3px;height:30px}
.btab.t2{width:209px;padding-left:8px}
.btab.t3{width:210px;padding-left:10px}
.btab.t4{width:210px;padding-left:14px}
.btab.t5{width:210px;padding-left:9px}
.btab.t6{width:210px;padding-left:9px}
.fav-s{width:12px;height:14px;background:radial-gradient(circle at 50% 50%,#fff 0 2px,#d8232a 3px);border-radius:6px;margin:2px 9px 0 0;flex:none}
.fav-so{width:10px;height:12px;background:repeating-linear-gradient(160deg,#f48024 0 1.500px,transparent 1.500px 3px);margin:4px 7px 0 0;flex:none}
.fav-php{width:16px;height:14px;background:#7377ad;margin:4px 6px 0 0;flex:none}
.bplus{font-size:24px;font-weight:700;line-height:18px;margin-left:12px;color:#333;padding-top:6px}

/* window */
.window{margin-left:4px;height:728px;border-top:1px solid #217346;border-left:1px solid #217346;background:#fff;box-shadow:0 -2px 3px rgba(0,0,0,.45);position:relative;overflow:hidden}
.caret{width:0;height:0;border-left:3.500px solid transparent;border-right:3.500px solid transparent;border-top:3.500px solid #6a6a6a;flex:none}
.caret.lite{border-top-color:#b5b5b5}
.caret.in{display:inline-block;vertical-align:middle;margin-left:3px}
.caret.gap10{margin-left:14px}
.caret.gap11{margin-left:11px}
.caret.gap8{margin-left:10px}
.caret.low{margin-top:7px}

.titlebar{height:28px;display:grid;grid-template-columns:1fr auto 1fr;align-items:center}
.qat{display:flex;align-items:center;padding-left:10px}
.i-xl{width:16px;height:16px}
.i-save{width:15px;height:15px;margin-left:14px;margin-right:13px}
.i-undo,.i-redo{width:16px;height:14px;margin-right:4px}
.qat .caret{margin-right:20px}
.qat .i-redo+.caret{margin-right:16px}
.qcust{width:7px;height:6px;border-top:1px solid #666;position:relative;border-bottom:3px solid transparent}
.qcust::after{content:"";position:absolute;left:0;top:2px;border-left:3.500px solid transparent;border-right:3.500px solid transparent;border-top:3.500px solid #666}
.doctitle{font-size:11.400px;color:#444}
.winbtns{display:flex;justify-content:flex-end;align-items:center}
.wb{width:29px;height:20px;display:flex;align-items:center;justify-content:center;color:#777}
.wb.help{font-weight:700;font-size:14px;color:#777}
.wb.close{font-size:15px;color:#666;width:24px;margin-left:3px}
.ropt{width:13px;height:9px;border:1px solid #777;border-top-width:2px}
.wmin{width:9px;height:2px;background:#777;margin-top:4px}
.wmax{width:10px;height:10px;border:1px solid #777;border-top-width:2px}

.tabs{height:25px;display:flex;align-items:stretch;border-bottom:1px solid #d4d4d4;position:relative}
.tab{padding:0 14.500px;line-height:24px;font-size:11.700px;color:#444;white-space:nowrap}
.tab.file{width:59px;background:#217346;color:#fff;text-align:center;padding:0;height:25px;margin-right:4px}
.tab.home{width:62px;height:25px;border:1px solid #d4d4d4;border-bottom:1px solid #fff;color:#217346;text-align:center;padding:0}
.user{margin-left:auto;display:flex;align-items:center;padding-right:7px;height:24px;color:#444;font-size:11.500px}
.user .caret{margin:0 6px 0 7px}
.avatar{width:24px;height:24px;background:#b4b4b4;position:relative;overflow:hidden;display:block}
.avatar i{position:absolute;left:7px;top:4px;width:10px;height:11px;border-radius:50%;background:#fff}
.avatar b{position:absolute;left:2px;top:15px;width:20px;height:14px;border-radius:8px 8px 0 0;background:#fff}

.ribbon{height:93px;border-bottom:1px solid #d4d4d4;display:flex;padding-top:4px;position:relative}
.group{height:84px;border-right:1px solid #d4d4d4;display:flex;flex-direction:column}
.g-clip{width:158px}.g-font{width:207px}.g-align{width:264px}.g-num{width:140px}.g-styles{width:181px}.g-cells{width:136px}.g-edit{width:187px}
.gbody{flex:1;display:flex;min-height:0}
.glabel{height:16px;line-height:23px;text-align:center;color:#666;font-size:11.200px;position:relative}
.glabel.withlaunch{padding-right:16px}
.launch{position:absolute;right:4px;top:9px;width:7px;height:7px}
.rows{display:block;padding-top:7px}
.gbody.rows{padding-left:5px}
.aligncol{padding-left:4px}
.row1,.row2{display:flex;align-items:center}
.row1{height:23px}
.row2{height:18px;margin-top:10px}
.t{display:flex;align-items:center;justify-content:center;flex:none;height:100%;color:#555}
.w8{width:8px}.w10{width:10px}.w12{width:12px}.w16{width:16px}.w18{width:18px}.w20{width:20px}.w21{width:21px}.w22{width:22px}
.ml1{margin-left:1px}.ml2{margin-left:2px}.ml4{margin-left:4px}.ml5{margin-left:5px}.ml6{margin-left:6px}.ml7{margin-left:7px}.ml10{margin-left:10px}
.vsep{width:1px;height:20px;background:#d4d4d4;display:block;flex:none}
.vsep.tall{height:55px;margin:6px 0 0 4px}
.i15{width:15px;height:15px}.i16{width:16px;height:15px}.i17{width:17px;height:18px}.i18{width:18px;height:16px}.i28{width:28px;height:28px}.i30{width:30px;height:30px}
.picked{background:#9fd5b7;height:23px}
.row1 .i15{height:12px}
.row2 .i15{height:12px}
.row2 .t .i15[class]{height:auto}
.bold{font:700 12.500px "Liberation Sans",sans-serif}
.ital{font:italic 700 12.500px "Liberation Serif",serif}
.und{font:700 12.500px "Liberation Sans",sans-serif;text-decoration:underline}
.sym{font-size:16px}
.comma{font-size:15px;font-weight:700;line-height:10px;align-items:flex-start}
.combo{height:23px;border:1px solid #ababab;display:flex;align-items:center;justify-content:space-between;padding:0 6px 0 2px;color:#222;font-size:11.200px;flex:none}
.w-font{width:112px}
.w-size{width:43px;margin-left:-1px}
.w-gen{width:131px}
.wrapcol{padding-left:7px}
.txt svg{margin-right:3px}
.si{width:16px;height:15px;margin-right:3px}

.big{display:flex;flex-direction:column;align-items:center;flex:none;white-space:nowrap;line-height:16px}
.big .caret.in{margin-left:3px}
.bigicon{height:37px;padding-top:1px;display:flex;align-items:center;justify-content:center}
.paste{width:48px}
.i-paste{width:29px;height:30px}
.w34{width:34px}.w44{width:44px}.w46{width:46px}.w50{width:50px}.w54{width:54px}.w82{width:82px}
.smallcol{display:flex;flex-direction:column;margin-top:-1px}
.small{display:flex;align-items:center;height:23px;white-space:nowrap}
.g-clip .big{margin-left:1px}
.editcol{width:95px;padding-left:8px}
.collapse{width:16px;position:relative;margin-left:73px}
.collapse i{position:absolute;left:0;top:79px;width:8px;height:8px;border-left:2px solid #666;border-top:2px solid #666;transform:rotate(45deg)}

.fbar{height:46px;padding:10px 2px 10px 5px;display:flex;position:relative}
.namebox{width:102px;height:26px;border:1px solid #c6c6c6;display:flex;align-items:center;justify-content:space-between;padding:0 9px 0 6px;color:#444;font-size:11.500px}
.fdots{width:2px;height:9px;margin:9px 14px 0 14px;background:repeating-linear-gradient(#999 0 2px,transparent 2px 4px)}
.fxbox{width:109px;height:26px;border:1px solid #c6c6c6;display:flex;align-items:center;color:#c0c0c0}
.fxx{font-size:22px;margin-left:8px;width:38px;line-height:24px}
.fxc{font-size:22px;width:34px;line-height:24px}
.fxf{font:italic 700 20px "Liberation Serif",serif;color:#777}
.finput{margin-left:4px;width:1109px;height:26px;border:1px solid #c6c6c6;position:relative}
.fchev{position:absolute;right:3px;top:5px;width:9px;height:9px;border-right:3px solid #777;border-bottom:3px solid #777;transform:rotate(45deg)}

.sheet{height:485px;display:flex}
.grid{width:1344px;border-right:1px solid #ababab;border-bottom:1px solid #ababab;font:13.900px Lato,"Liberation Sans",sans-serif;color:#111}
.colhead{display:flex;height:20px;border-bottom:1px solid #ababab;color:#444}
.corner{width:26px;border-right:1px solid #d4d4d4;position:relative;display:block}
.corner i{position:absolute;right:3px;bottom:2px;border-style:solid;border-width:0 0 13px 12px;border-color:transparent transparent #d8d8d8 transparent}
.ch{width:64px;border-right:1px solid #d4d4d4;text-align:center;line-height:19px;display:block;flex:none}
.ch.last{width:37px;border-right:0;text-align:right;padding-right:0;overflow:hidden}
.ch.on{background:#dcdcdc;color:#217346;font-weight:700;border-bottom:1px solid #217346;height:20px}
.gr{display:flex;height:20px;border-bottom:1px solid #d4d4d4}
.rh{width:26px;flex:none;border-right:1px solid #ababab;text-align:center;line-height:20px;color:#444;display:block;background:#fff}
.rh.on{background:#dcdcdc;color:#217346;font-weight:700}
.blank{flex:1;position:relative;background:repeating-linear-gradient(90deg,transparent 0 63px,#d4d4d4 63px 64px)}
.c{width:64px;flex:none;border-right:1px solid #d4d4d4;overflow:hidden;white-space:nowrap;padding-left:2px;line-height:20px;display:block}
.c.last{width:35px;border-right:0}
.partial{height:4px;border-bottom:0}
.a1{position:absolute;left:-2px;top:-2px;width:67px;height:23px;border:2px solid #217346;z-index:2}
.a1 i{position:absolute;right:-4px;bottom:-4px;width:6px;height:6px;background:#217346;border:1px solid #fff}

.vscroll{width:15px;margin-left:2px;margin-top:2px;background:#f0f0f0;display:flex;flex-direction:column;height:484px}
.sbtn{height:15px;flex:none;border:1px solid #c6c6c6;background:#fff;display:flex;align-items:center;justify-content:center}
.sbtn .up{border-left:4px solid transparent;border-right:4px solid transparent;border-bottom:4px solid #666}
.sbtn .down{border-left:4px solid transparent;border-right:4px solid transparent;border-top:4px solid #666}
.sthumb{height:433px;background:#fff;border:1px solid #ababab;border-top:0;margin-bottom:20px}

.sheetbar{height:24px;background:#f5f5f5;display:flex;position:relative}
.snav{width:100px;display:flex;align-items:center;padding-left:26px;gap:22px;height:24px}
.al{border-top:4px solid transparent;border-bottom:4px solid transparent;border-right:5px solid #777}
.ar{border-top:4px solid transparent;border-bottom:4px solid transparent;border-left:5px solid #777}
.stab{width:48px;height:24px;background:#fff;border:1px solid #888;border-top:0;text-align:center;font-weight:700;color:#217346;line-height:24px;font-size:12px}
.splus{width:15px;height:15px;border-radius:50%;border:1.500px solid #888;margin:5px 0 0 34px;text-align:center;line-height:11px;color:#888;font-size:14px;font-weight:700}
.hscroll{margin:6px 18px 0 auto;width:508px;height:15px;display:flex}
.hb{width:15px;height:15px;border:1px solid #aaa;background:#fff;display:flex;align-items:center;justify-content:center;flex:none}
.hthumb{width:342px;height:15px;background:#fff;border:1px solid #aaa;border-left:0}
.hb.end{margin-left:auto}

/* taskbar over the window */
.taskbar{position:absolute;left:4px;top:716px;width:1362px;height:40px;background:linear-gradient(rgba(172,120,146,.86) 0 17px,rgba(74,60,68,.9) 17px 40px);display:flex;color:#fff}
.ready{position:absolute;left:10px;top:22px;font-size:10.500px;color:#a27f93}
.start{width:52px;flex:none;padding:7px 0 0 12px}
.i-win{width:27px;height:25px}
.tb{width:58px;height:39px;margin:1px 4px 0 0;flex:none;display:flex;align-items:center;justify-content:center;border:1px solid transparent;position:relative}
.tb.on{border-color:rgba(255,255,255,.32);background:rgba(255,255,255,.2);box-shadow:0 0 0 1px rgba(50,30,40,.35)}
.tb.act{border-color:#fff;background:rgba(255,255,255,.4)}
.tb.stack{width:54px;margin-right:8px}
.tb.stack::after{content:"";position:absolute;left:100%;top:-1px;bottom:-1px;width:4px;border:1px solid rgba(255,255,255,.35);border-left:0;background:rgba(255,255,255,.15);margin-left:1px}
.tb.act.stack::after{border-color:#fff}
.ti{width:31px;height:31px}
.tray{flex:1;display:flex;position:relative;min-width:0}
.tray .vw{width:38px;height:23px;margin-top:17px;display:flex;align-items:center;justify-content:center}
.vw.active{background:#584b53;margin-left:18px}
.g1{width:13px;height:13px;border:1px solid #a07e92;background:linear-gradient(#a07e92,#a07e92) 0 3px/100% 1px no-repeat,linear-gradient(#a07e92,#a07e92) 0 7px/100% 1px no-repeat,linear-gradient(#a07e92,#a07e92) 3px 0/1px 100% no-repeat,linear-gradient(#a07e92,#a07e92) 7px 0/1px 100% no-repeat}
.g2{width:13px;height:13px;border:1px solid #a07e92;box-shadow:inset 0 0 0 2px #5a4d55,inset 0 0 0 3px #a07e92}
.showhid{width:16px;height:13px;margin:19px 0 0 12px;position:relative;display:block}
.g3{width:14px;height:13px;background:#8a6c7d;border-bottom:1px solid #a07e92}
.showhid b{position:absolute;right:-4px;top:-4px;border-left:4px solid transparent;border-right:4px solid transparent;border-bottom:4px solid #fff}
.slider{position:absolute;left:138px;width:110px;top:27px;height:1px;background:#a07e92}
.slider::before{content:"";position:absolute;left:58px;top:-5px;width:4px;height:6px;background:#a07e92}
.slider::after{content:"";position:absolute;right:-8px;top:-2px;width:7px;height:5px;border-top:1px solid #a07e92;border-bottom:1px solid #a07e92}
.ico{display:flex;height:23px;margin-top:17px;align-items:flex-end}
.i-pow{width:16px;height:16px;margin:17px 0 0 14px}
.sig{margin-left:9px;gap:1px;width:15px;padding-bottom:9px}
.sig i{width:3px;background:#fff}
.sig i:nth-child(1){height:3px}.sig i:nth-child(2){height:6px}.sig i:nth-child(3){height:8px}.sig i:nth-child(4){height:10px}
.i-spk{width:14px;height:14px;margin:18px 0 0 9px}
.eng{margin:20px 0 0 15px;font-size:11.800px;line-height:14px;color:#fff}
.clock{margin-left:auto;margin-right:16px;padding:5px 0 0 0;width:62px;display:flex;flex-direction:column;align-items:flex-end;font-size:12px;line-height:16px;color:#fff}
.date{margin-right:-2px}
```
